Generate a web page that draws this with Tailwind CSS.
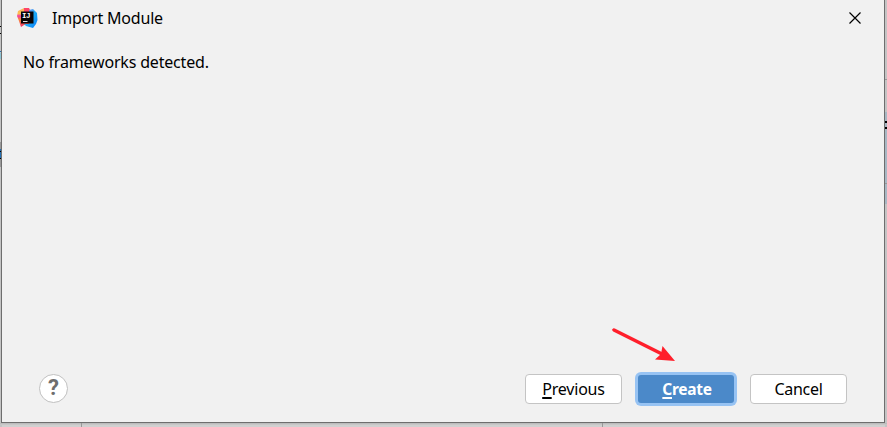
<!DOCTYPE html>
<html lang="en">
<head>
<meta charset="utf-8">
<title>Import Module</title>
<script src="https://cdn.jsdelivr.net/npm/@tailwindcss/browser@4"></script>
</head>
<body class="relative h-[427px] w-[887px] overflow-hidden bg-[#d0d0d0] font-['Noto_Sans','Open_Sans',sans-serif] text-base tracking-[-0.18px] text-black">
  <!-- Editor window behind the dialog -->
  <svg class="absolute inset-0" width="887" height="427" shape-rendering="crispEdges" aria-hidden="true">
    <path fill="#c4c4c4" d="M0 0h2v427H0zM885 0h2v427h-2z"/>
    <path fill="#a8b8c4" d="M885 112h2v92h-2z"/>
    <path fill="#999" d="M885 79h2v1h-2zM885 183h2v1h-2z"/>
    <path fill="#000" d="M885 121h2v2h-2zM885 127h2v2h-2zM0 26h1v1H0zM0 33h1v1H0z"/>
    <path fill="#2470b3" d="M0 51h1v1H0zM0 149h1v9H0z"/>
    <path fill="#8fc5d5" d="M0 53h1v6H0z"/>
    <path fill="#999" d="M0 142h1v7H0zM0 158h1v9H0z"/>
    <path fill="#000" d="M0 151h1v1H0zM0 158h1v1H0z"/>
    <path fill="#bcbcbc" d="M0 423h887v1H0z"/>
    <path fill="#c7c7c7" d="M0 424h887v1H0z"/>
    <path fill="#999" d="M81 423h1v4h-1zM602 423h1v4h-1z"/>
  </svg>
  <main class="relative ml-px flex h-[423px] w-[884px] flex-col border-x border-b border-[#6e6e6e] bg-[#f1f1f1]">
    <header class="flex h-9 items-center pl-[15px] pr-[22px]">
      <svg width="22" height="22" viewBox="0 0 22 22" aria-hidden="true">
        <defs>
          <linearGradient id="warm" x1="0" y1="0" x2="0" y2="1"><stop offset="0" stop-color="#fdb060"/><stop offset=".3" stop-color="#fdc04f"/><stop offset=".42" stop-color="#f33aa9"/><stop offset=".6" stop-color="#f98a35"/><stop offset="1" stop-color="#ee2a6a"/></linearGradient>
          <linearGradient id="cool" x1="0" y1="0" x2="1" y2="1"><stop offset="0" stop-color="#a080e8"/><stop offset=".5" stop-color="#1eabf5"/><stop offset="1" stop-color="#087cfa"/></linearGradient>
        </defs>
        <path fill="url(#warm)" d="M1 4 7 1l5 3v13l-5 1-3 2-1-3-1-3-2-5z"/>
        <path fill="#fe4568" d="M7 1h5l2 4H7z"/>
        <path fill="url(#cool)" d="m12 3 4-1 4 4 .5 7-1.500 4-3 4-7-2-2-2h5z"/>
        <path fill="#080406" d="M4 4.500h12.500v12H4z"/>
        <text x="5" y="11" class="fill-white font-['Liberation_Mono',monospace] text-[7.5px] font-bold tracking-[-0.6px]">IJ</text>
        <path fill="#ddd" d="M6 14h4.500v1H6z"/>
      </svg>
      <h1 class="ml-[13px] whitespace-nowrap leading-6 tracking-[-0.2px]">Import Module</h1>
      <button class="ml-auto" aria-label="Close">
        <svg width="14" height="14" viewBox="0 0 14 14" fill="none" stroke="#000" stroke-width="1.2"><path d="m1.500 1.500 11 11m0-11-11 11"/></svg>
      </button>
    </header>
    <section class="flex-1 pl-[21px] pt-[14px] leading-6">
      <p>No frameworks detected.</p>
    </section>
    <footer class="mb-[15px] flex h-9 items-center pl-[37px] pr-[37px]">
      <button class="-mt-[2px] flex size-[29px] items-center justify-center rounded-full border border-[#c0c0c0] bg-white" aria-label="Help">
        <span class="font-['Roboto',sans-serif] text-[22px] font-bold leading-none text-[#6e6e6e]">?</span>
      </button>
      <button class="ml-auto h-[30px] w-[97px] rounded-[4px] border border-[#c4c4c4] bg-white leading-7 tracking-[-0.2px]"><span class="underline decoration-[1.5px] underline-offset-[2px]">P</span>revious</button>
      <button class="ml-4 h-[28px] w-[96px] rounded-[3px] bg-[#4b89c9] pl-[2px] text-[15.5px] font-bold leading-7 tracking-[-0.3px] text-white ring-3 ring-[#97c3f3]"><span class="underline decoration-2 underline-offset-[2px]">C</span>reate</button>
      <button class="ml-4 h-[30px] w-[97px] rounded-[4px] border border-[#c4c4c4] bg-white leading-7 tracking-[-0.3px]">Cancel</button>
    </footer>
  </main>
  <!-- Pointer annotation over the dialog -->
  <svg class="absolute left-[610px] top-[325px]" width="68" height="40" viewBox="0 0 68 40" aria-hidden="true">
    <path d="m4 5 49 24.500" stroke="#ff1f2b" stroke-width="3.500" stroke-linecap="round"/>
    <path fill="#ff1f2b" d="m65 36-20-1.500 6-5.500 1.500-8z"/>
  </svg>
</body>
</html>
